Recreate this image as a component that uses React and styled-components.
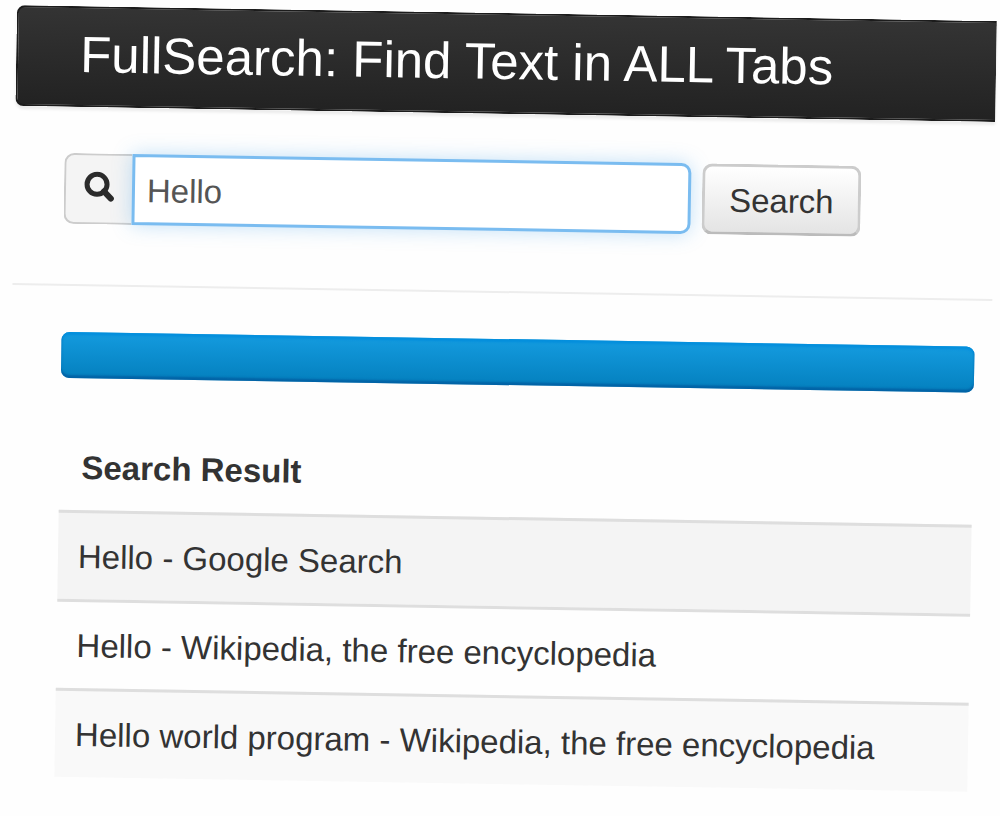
import React, { useState } from "react";
import styled, { createGlobalStyle } from "styled-components";

const GlobalStyle = createGlobalStyle`
  *, *::before, *::after { box-sizing: border-box; }
  body {
    min-height: 100vh;
    margin: 0;
    background: #fefefe;
    color: #333;
    font-family: "Liberation Sans", Arial, Helvetica, sans-serif;
    font-size: 33px;
    line-height: 48px;
  }
`;

/* The whole page hangs slightly tilted from its top left corner. */
const Page = styled.div`
  padding: 5px 3px 0 17px;
  transform: rotate(0.94deg);
  transform-origin: 17px 5px;
`;

const Navbar = styled.header`
  padding: 23px 62px 26px;
  border: 2px solid #1c1c1c;
  border-right: 0;
  border-radius: 8px 0 0 8px;
  background: linear-gradient(#343434, #222) border-box;
  box-shadow: 0 3px 3px rgba(0, 0, 0, 0.08);
`;

const Brand = styled.h1`
  margin: 0;
  color: #fff;
  font-size: 51px;
  font-weight: 400;
  line-height: 48px;
  white-space: nowrap;
`;

const SearchForm = styled.form`
  display: flex;
  align-items: stretch;
  padding: 46px 50px 60px;
`;

const AddOn = styled.label`
  display: flex;
  flex: none;
  align-items: center;
  width: 68px;
  padding-left: 17px;
  border: 2px solid #ccc;
  border-right: 0;
  border-radius: 10px 0 0 10px;
  background: #f4f4f4;
`;

const Query = styled.input`
  flex: 0 1 559px;
  min-width: 0;
  height: 71px;
  margin-right: 11px;
  padding: 2px 12px 0;
  border: 3px solid #7abcf0;
  border-radius: 0 10px 10px 0;
  outline: 0;
  background: #fff;
  box-shadow: 0 0 19px rgba(82, 168, 236, 0.35);
  color: #555;
  font: inherit;
`;

const SearchButton = styled.button`
  flex: none;
  width: 159px;
  padding: 3px 0 0;
  border: 3px solid #ccc;
  border-bottom-color: #bbb;
  border-radius: 10px;
  background: linear-gradient(#fff, #e4e4e4);
  color: #333;
  font: inherit;
`;

const Divider = styled.hr`
  height: 2px;
  margin: 0;
  border: 0;
  background: #ededed;
`;

const Main = styled.main`
  padding: 46px 17px 0 50px;
`;

const Progress = styled.div`
  height: 46px;
  border-radius: 8px;
  background: linear-gradient(#149bdf, #0480be);
  box-shadow: inset 0 -3px 2px rgba(0, 80, 150, 0.6), inset 0 3px 2px rgba(0, 140, 220, 0.8);
`;

const Results = styled.table`
  width: 100%;
  margin-top: 44px;
  border-collapse: separate;
  border-spacing: 0;
`;

const Heading = styled.th`
  padding: 22px 22px 18px;
  text-align: left;
`;

const tones = { active: "#f4f4f4", plain: "transparent", striped: "#f9f9f9" };

const Result = styled.td`
  padding: 20px 20px 18px;
  border-top: 3px solid #dedede;
  background: ${({ $tone }) => tones[$tone]};
  white-space: nowrap;
`;

const results = [
  { title: "Hello - Google Search", tone: "active" },
  { title: "Hello - Wikipedia, the free encyclopedia", tone: "plain" },
  { title: "Hello world program - Wikipedia, the free encyclopedia", tone: "striped" },
];

function SearchIcon() {
  return (
    <svg width="32" height="36" viewBox="0 0 32 36" fill="none" stroke="#2b2b2b" aria-hidden="true">
      <circle cx="14" cy="13" r="10" strokeWidth="5" />
      <path d="M21 20L28 27" strokeWidth="6" strokeLinecap="round" />
    </svg>
  );
}

export default function App() {
  const [query, setQuery] = useState("Hello");
  return (
    <>
      <GlobalStyle />
      <Page>
        <Navbar>
          <Brand>FullSearch: Find Text in ALL Tabs</Brand>
        </Navbar>
        <SearchForm onSubmit={(event) => event.preventDefault()}>
          <AddOn htmlFor="query" aria-label="Search text">
            <SearchIcon />
          </AddOn>
          <Query id="query" type="text" value={query} onChange={(event) => setQuery(event.target.value)} />
          <SearchButton type="submit">Search</SearchButton>
        </SearchForm>
        <Divider />
        <Main>
          <Progress role="progressbar" aria-label="Search progress" aria-valuenow={100} aria-valuemin={0} aria-valuemax={100} />
          <Results>
            <thead>
              <tr>
                <Heading scope="col">Search Result</Heading>
              </tr>
            </thead>
            <tbody>
              {results.map(({ title, tone }) => (
                <tr key={title}>
                  <Result $tone={tone}>{title}</Result>
                </tr>
              ))}
            </tbody>
          </Results>
        </Main>
      </Page>
    </>
  );
}
